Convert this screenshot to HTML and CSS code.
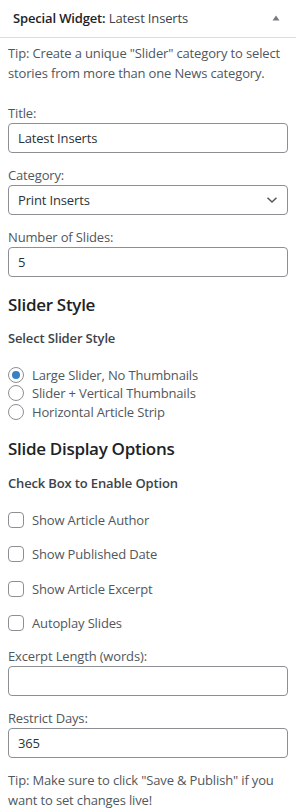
FILE: index.html
```html
<!DOCTYPE html>
<html lang="en">
<head>
  <meta charset="UTF-8" />
  <meta name="viewport" content="width=device-width, initial-scale=1.0"/>
  <title>Special Widget: Latest Inserts</title>
  <link rel="stylesheet" href="styles.css">
</head>
<body>
  <div class="widget">
    <div class="widget-top">
      <h3 class="widget-title">Special Widget: <span>Latest Inserts</span></h3>
      <span class="toggle">
        <svg width="8" height="6" viewBox="0 0 8 6"><path d="M4 0.5 L7.5 5.5 H0.5 Z" fill="#787c82"/></svg>
      </span>
    </div>

    <div class="widget-inside">
      <p class="tip">Tip: Create a unique "Slider" category to select stories from more than one News category.</p>

      <div class="field">
        <label for="title">Title:</label>
        <input type="text" id="title" class="text" value="Latest Inserts">
      </div>

      <div class="field">
        <label for="cat">Category:</label>
        <div class="select-wrap">
          <select id="cat">
            <option>Print Inserts</option>
          </select>
          <svg class="chevron" width="12" height="8" viewBox="0 0 12 8"><path d="M1.5 1.8 L6 6 L10.5 1.8" fill="none" stroke="#50575e" stroke-width="1.5"/></svg>
        </div>
      </div>

      <div class="field">
        <label for="slides">Number of Slides:</label>
        <input type="text" id="slides" class="text" value="5">
      </div>

      <h4 class="section-title">Slider Style</h4>
      <p class="sub-title">Select Slider Style</p>

      <div class="radios">
        <label class="radio"><input type="radio" name="style" checked> Large Slider, No Thumbnails</label>
        <label class="radio"><input type="radio" name="style"> Slider + Vertical Thumbnails</label>
        <label class="radio"><input type="radio" name="style"> Horizontal Article Strip</label>
      </div>

      <h4 class="section-title options">Slide Display Options</h4>
      <p class="sub-title enable">Check Box to Enable Option</p>

      <div class="checks">
        <label class="check"><input type="checkbox"> Show Article Author</label>
        <label class="check"><input type="checkbox"> Show Published Date</label>
        <label class="check"><input type="checkbox"> Show Article Excerpt</label>
        <label class="check"><input type="checkbox"> Autoplay Slides</label>
      </div>

      <div class="field">
        <label for="excerpt">Excerpt Length (words):</label>
        <input type="text" id="excerpt" class="text" value="">
      </div>

      <div class="field">
        <label for="days">Restrict Days:</label>
        <input type="text" id="days" class="text" value="365">
      </div>

      <p class="tip last">Tip: Make sure to click "Save &amp; Publish" if you want to set changes live!</p>
    </div>
  </div>
</body>
</html>
```

FILE: styles.css
```css
* { margin: 0; padding: 0; box-sizing: border-box; }

body {
  font-family: "Open Sans", "Noto Sans", sans-serif;
  font-size: 13px;
  letter-spacing: -0.15px;
  color: #50575e;
  background: #fff;
}

.widget-top {
  display: flex;
  justify-content: space-between;
  align-items: center;
  height: 38px;
  padding: 0 16px 2px 13px;
  border-bottom: 1px solid #dcdcde;
}

.widget-title {
  font-size: 13px;
  font-weight: 600;
  color: #1d2327;
}

.widget-title span {
  font-weight: 400;
  color: #3c434a;
}

.toggle {
  display: flex;
}

.widget-inside {
  padding: 6px 8px 20px;
}

.tip {
  line-height: 19.5px;
  margin-bottom: 21px;
}

.tip.last {
  margin-bottom: 0;
}

.field {
  margin-bottom: 13px;
}

.field label {
  display: block;
  line-height: 19px;
}

.text,
.select-wrap select {
  display: block;
  width: 100%;
  height: 30px;
  padding: 0 9px;
  border: 1px solid #8c8f94;
  border-radius: 4px;
  font-family: inherit;
  font-size: 13px;
  letter-spacing: inherit;
  color: #2c3338;
  background: #fff;
}

.select-wrap {
  position: relative;
}

.select-wrap select {
  appearance: none;
  -webkit-appearance: none;
  padding-right: 30px;
}

.chevron {
  position: absolute;
  right: 10px;
  top: 11px;
}

.section-title {
  font-size: 17px;
  font-weight: 600;
  line-height: 22px;
  letter-spacing: -0.3px;
  color: #1d2327;
  margin-top: 17px;
}

.section-title.options {
  margin-top: 17px;
}

.sub-title {
  font-weight: 600;
  color: #3c434a;
  line-height: 19.5px;
  margin-top: 13px;
}

.sub-title.enable {
  margin-top: 14px;
}

.radios {
  display: flex;
  flex-direction: column;
  margin-top: 17px;
}

.radio,
.check {
  display: flex;
  align-items: center;
  gap: 8px;
}

.radio {
  height: 18.5px;
  line-height: 18.5px;
}

.checks {
  display: flex;
  flex-direction: column;
  gap: 14.5px;
  margin-top: 16px;
  margin-bottom: 14px;
}

.check {
  height: 20px;
}

.radio input,
.check input {
  appearance: none;
  -webkit-appearance: none;
  width: 16px;
  height: 16px;
  border: 1px solid #8c8f94;
  background: #fff;
  flex-shrink: 0;
}

.radio input {
  border-radius: 50%;
  position: relative;
}

.radio input:checked::before {
  content: '';
  position: absolute;
  top: 3px;
  left: 3px;
  width: 8px;
  height: 8px;
  border-radius: 50%;
  background: #3582c4;
}

.check input {
  border-radius: 4px;
}
```
